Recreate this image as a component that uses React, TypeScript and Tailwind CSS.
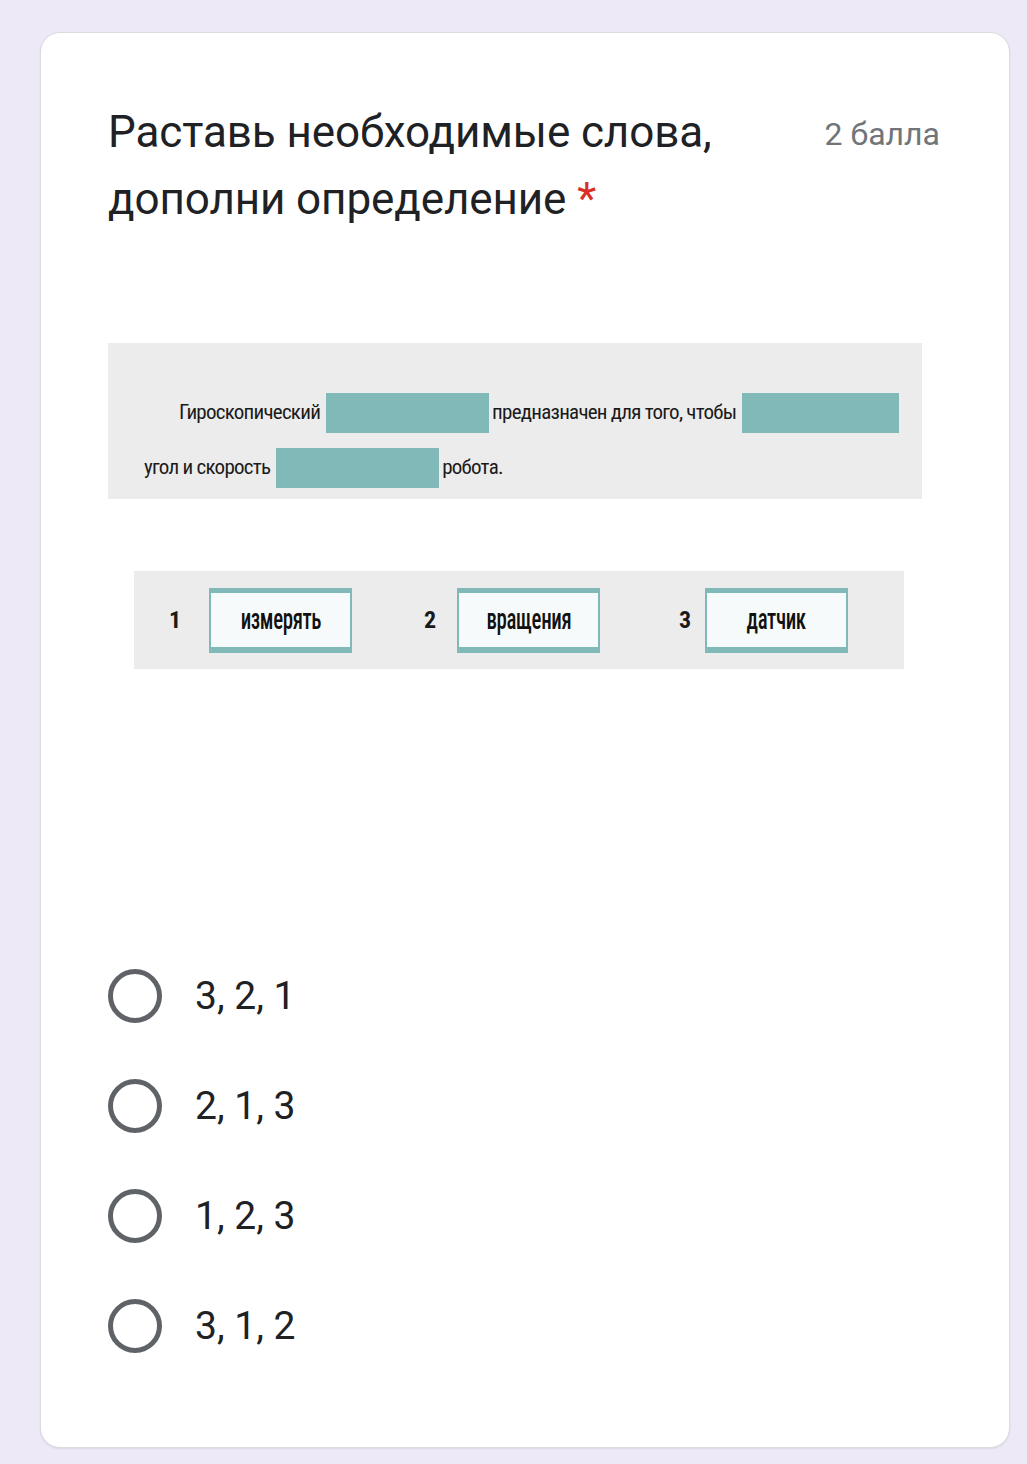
const options = ['3, 2, 1', '2, 1, 3', '1, 2, 3', '3, 1, 2'];

const words = [
  { n: '1', w: 'измерять', gap: 'ml-[35px]', numW: 'w-[40px]' },
  { n: '2', w: 'вращения', gap: 'ml-[72px]', numW: 'w-[33px]' },
  { n: '3', w: 'датчик', gap: 'ml-[79px]', numW: 'w-[26px]' },
];

function Blank({ w }: { w: string }) {
  return <span className={`inline-block h-[40px] ${w} bg-[#80b9b8]`} />;
}

export default function App() {
  return (
    <div className="min-h-[1464px] bg-[#ede9f7] pl-[40px] pr-[17px] pt-[32px] pb-[16px] font-['Roboto','Liberation_Sans',sans-serif]">
      <div className="h-[1416px] rounded-[20px] border border-[#dadce0] bg-white pl-[67px] pr-[69px] pt-[66px] shadow-[0_1px_2px_rgba(0,0,0,0.08)]">
        {/* заголовок */}
        <div className="flex items-start justify-between">
          <h1 className="w-[640px] text-[44px] leading-[67px] text-[#202124] tracking-[-0.1px]">
            Раставь необходимые слова, дополни определение{' '}
            <span className="text-[#d93025]">*</span>
          </h1>
          <span className="pt-[2px] text-[32px] leading-[67px] text-[#70757a]">2 балла</span>
        </div>

        {/* картинка с заданием */}
        <div className="mt-[110px] w-[814px] bg-[#ececec] pb-[11px] pt-[50px] font-['Roboto_Condensed','Roboto','Liberation_Sans',sans-serif] text-[21px] tracking-[-0.75px] text-[#1a1a1a]">
          <div className="flex items-center gap-[6px] pl-[71px]">
            <span>Гироскопический</span>
            <Blank w="w-[163px]" />
            <span className="-ml-[3px]">предназначен для того, чтобы</span>
            <Blank w="w-[157px]" />
          </div>
          <div className="mt-[15px] flex items-center gap-[6px] pl-[36px]">
            <span>угол и скорость</span>
            <Blank w="w-[163px]" />
            <span className="-ml-[3px]">робота.</span>
          </div>
        </div>

        <div className="ml-[26px] mt-[72px] flex h-[98px] w-[770px] items-center bg-[#ececec] font-['Roboto_Condensed','Roboto','Liberation_Sans',sans-serif]">
          {words.map(item => (
            <div key={item.n} className={`flex items-center ${item.gap}`}>
              <span className={`${item.numW} text-[24px] font-bold text-[#1a1a1a]`}>{item.n}</span>
              <div className="flex h-[65px] w-[143px] items-center justify-center border-x-2 border-b-[6px] border-t-[5px] border-[#80b9b8] bg-[#f7fafa] text-[29px] font-medium text-[#111]">
                <span className="inline-block scale-x-[0.72] tracking-[-0.5px]">{item.w}</span>
              </div>
            </div>
          ))}
        </div>

        {/* варианты ответа */}
        <div className="mt-[300px] flex flex-col gap-[56px]">
          {options.map(o => (
            <label key={o} className="flex items-center">
              <span className="h-[54px] w-[54px] rounded-full border-[5px] border-[#5f6368]" />
              <span className="ml-[33px] text-[39px] leading-[54px] text-[#202124]">{o}</span>
            </label>
          ))}
        </div>
      </div>
    </div>
  );
}
